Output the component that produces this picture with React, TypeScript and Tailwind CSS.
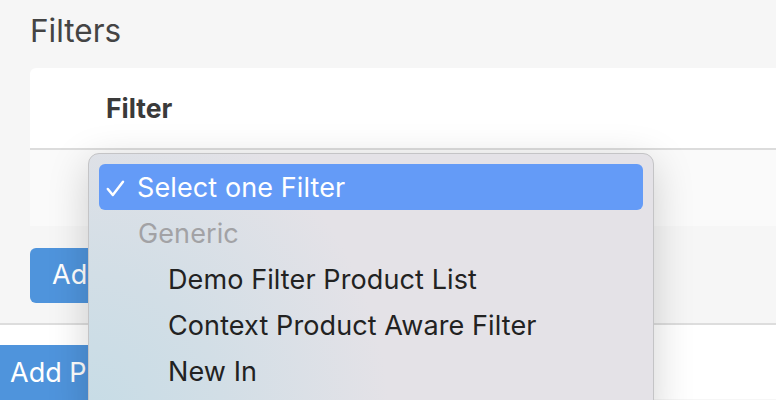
const options = ["Demo Filter Product List", "Context Product Aware Filter", "New In"];

export default function App() {
  return (
    <div className="relative h-[400px] w-[776px] overflow-hidden bg-[#f6f6f6] font-['Inter','Liberation_Sans',sans-serif]">
      <div className="pl-[30px]">
        <h2 className="pt-[12px] text-[31.5px] leading-[38px] text-[#444]">Filters</h2>
        <div className="mt-[18px] overflow-hidden rounded-tl-[6px]">
          <div className="flex h-[80px] items-center bg-white pl-[76px] pt-[1px] text-[26.5px] font-bold text-[#3a3a3a]">Filter</div>
          <div className="h-[2px] bg-[#dcdcdc]" />
          <div className="h-[76px] bg-[#fafafa]" />
        </div>
        <div className="mt-[22px] flex h-[55px] w-[200px] items-center rounded-[6px] bg-[#4f94dc] pl-[22px] text-[27px] text-white">Add Filter</div>
      </div>
      <div className="mt-[20px] h-[2px] bg-[#dddddd]" />
      <div className="h-[74px] bg-white pt-[20px]">
        <div className="flex h-[56px] w-[300px] items-center bg-[#4f94dc] pl-[10px] text-[27px] text-white">Add Product</div>
      </div>

      <div className="absolute left-[88px] top-[153px] h-[270px] w-[566px] rounded-[11px] border border-[#c4c4c6] bg-[#e4e2e7] bg-[radial-gradient(ellipse_300px_330px_at_0%_100%,#c6dce6_0%,#d2dee6_45%,#e4e2e7_100%)] p-[10px] text-[27px] tracking-[0.1px] shadow-[0_10px_40px_rgba(0,0,0,0.18)]">
        <div className="flex h-[46px] items-center rounded-[6px] bg-[#649bf7] pl-[7px] pt-[2px] text-white">
          <svg width="19" height="17" viewBox="0 0 19 17" className="mr-[12px] mt-[1px]" fill="none" stroke="currentColor" strokeWidth="2.5" strokeLinecap="round" strokeLinejoin="round">
            <path d="M1.8 9 L6.8 15 L17 1.8" />
          </svg>
          <span>Select one Filter</span>
        </div>
        <div className="flex h-[46px] items-center pl-[39px] pt-[3px] text-[#a2a2a5]">Generic</div>
        {options.map((o) => (
          <div key={o} className="flex h-[46px] items-center pl-[69px] pt-[3px] text-[#222]">
            {o}
          </div>
        ))}
      </div>
    </div>
  );
}
